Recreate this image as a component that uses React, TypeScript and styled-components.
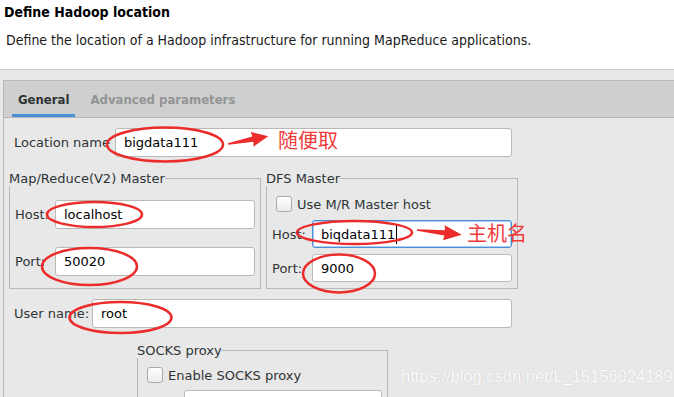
import React from 'react';
import styled, { createGlobalStyle } from 'styled-components';

const GlobalStyle = createGlobalStyle`
  html, body {
    margin: 0;
    padding: 0;
    width: 674px;
    height: 397px;
    overflow: hidden;
    background: #e8e8e8;
  }
  body {
    font-family: "DejaVu Sans", sans-serif;
    font-size: 13px;
    color: #2e3436;
  }
`;

const Page = styled.div`
  position: relative;
  width: 674px;
  height: 397px;
  overflow: hidden;
  background: #e8e8e8;
`;

const Header = styled.div`
  box-sizing: border-box;
  height: 70px;
  padding: 4px 0 0 4px;
  background: #fff;
  border-bottom: 1px solid #cdcdcd;
`;

const Title = styled.div`
  font-family: "DejaVu Sans Condensed", "DejaVu Sans", sans-serif;
  font-stretch: condensed;
  font-size: 14px;
  font-weight: bold;
  line-height: 16px;
  color: #000;
`;

const Subtitle = styled.div`
  font-family: "DejaVu Sans Condensed", "DejaVu Sans", sans-serif;
  font-stretch: condensed;
  font-size: 14px;
  line-height: 16px;
  margin: 12px 0 0 2px;
  color: #1a1a1a;
`;

const Notebook = styled.div`
  margin: 10px 0 0 3px;
  border-left: 1px solid #b8b8b8;
  height: 400px;
`;

const TabBar = styled.div`
  box-sizing: border-box;
  height: 38px;
  display: flex;
  gap: 9px;
  padding-left: 8px;
  background: #cfcfcf;
  border-top: 1px solid #b9b9b9;
  border-bottom: 1px solid #b4b4b4;
`;

const Tab = styled.div<{ $active?: boolean }>`
  box-sizing: border-box;
  height: 100%;
  display: flex;
  align-items: center;
  padding: 3px 6px 0;
  font-family: "DejaVu Sans Condensed", "DejaVu Sans", sans-serif;
  font-stretch: condensed;
  font-weight: bold;
  color: ${p => (p.$active ? '#2e3436' : '#929595')};
  border-bottom: 3px solid ${p => (p.$active ? '#4a90d9' : 'transparent')};
`;

const Content = styled.div`
  padding: 10px 0 0 5px;
`;

const Row = styled.div<{ $labelWidth: number; $top?: number }>`
  display: flex;
  align-items: center;
  width: 498px;
  margin: ${p => p.$top || 0}px 0 0 5px;
  & > label {
    flex: 0 0 ${p => p.$labelWidth}px;
    white-space: nowrap;
  }
`;

const Entry = styled.div<{ $focused?: boolean; $height?: number }>`
  box-sizing: border-box;
  flex: 1;
  height: ${p => p.$height || 29}px;
  display: flex;
  align-items: center;
  padding: 0 8px;
  background: #fff;
  color: #000;
  border: 1px solid ${p => (p.$focused ? '#4a90d9' : '#b9b9b6')};
  box-shadow: ${p => (p.$focused ? 'inset 0 0 0 1px rgba(74,144,217,0.45)' : 'none')};
  border-radius: 3px;
  white-space: nowrap;
  overflow: hidden;
`;

const IndentedEntry = styled(Entry)`
  grid-column: 1 / 3;
  margin-left: 37px;
`;

const Caret = styled.span`
  display: inline-block;
  width: 1px;
  height: 20px;
  margin-left: 1px;
  background: #000;
`;

const Groups = styled.div`
  display: flex;
  gap: 5px;
  width: 509px;
  margin-top: 14px;
`;

const Group = styled.div<{ $width?: number; $left?: number; $top?: number }>`
  display: flex;
  flex-direction: column;
  ${p => (p.$width ? `width: ${p.$width}px;` : 'flex: 1;')}
  margin: ${p => p.$top || 0}px 0 0 ${p => p.$left || 0}px;
`;

const GroupTitle = styled.div`
  display: flex;
  height: 15px;
  line-height: 15px;
  white-space: nowrap;
  &::after {
    content: '';
    flex: 1;
    margin-top: 7px;
    border-top: 1px solid #b9b9b9;
    border-right: 1px solid #b9b9b9;
  }
`;

const GroupBody = styled.div<{ $pad: string; $rowGap: number }>`
  flex: 1;
  display: grid;
  grid-template-columns: auto 1fr;
  align-content: start;
  align-items: center;
  column-gap: 6px;
  row-gap: ${p => p.$rowGap}px;
  padding: ${p => p.$pad};
  border: 1px solid #b9b9b9;
  border-top: none;
`;

const CheckRow = styled.div<{ $indent?: number }>`
  grid-column: 1 / 3;
  display: flex;
  align-items: center;
  gap: 5px;
  height: 20px;
  margin-left: ${p => p.$indent ?? 4}px;
`;

const Check = styled.span`
  box-sizing: border-box;
  width: 16px;
  height: 16px;
  border: 1px solid #a9a9a9;
  border-radius: 3px;
  background: linear-gradient(#ffffff, #ececec);
`;

const Marks = styled.svg`
  position: absolute;
  left: 0;
  top: 0;
  pointer-events: none;
`;

const Note = styled.span<{ $x: number; $y: number }>`
  position: absolute;
  left: ${p => p.$x}px;
  top: ${p => p.$y}px;
  font-family: "Noto Sans CJK SC", sans-serif;
  font-size: 20px;
  line-height: 20px;
  color: #ef3a3a;
`;

const Watermark = styled.div`
  position: absolute;
  left: 401px;
  top: 367px;
  font-family: "Liberation Sans", Arial, sans-serif;
  font-size: 16.5px;
  line-height: 18px;
  color: rgba(255, 255, 255, 0.95);
  text-shadow: 0 0 1px rgba(150, 150, 150, 0.45);
  white-space: nowrap;
`;

const RED = '#ec2b2b';

// arrow drawn along +x from its tail, then placed and turned
const arrow = (x: number, y: number, len: number, angle: number) => {
  const pts = [
    [0, -0.8], [0.62, -2.6], [0.6, -7.5], [1, 0], [0.6, 7.5], [0.62, 2.6], [0, 0.8],
  ]
    .map(([a, b]) => `${(a * len).toFixed(1)},${b}`)
    .join(' ');
  return <polygon points={pts} fill={RED} transform={`translate(${x} ${y}) rotate(${angle})`} />;
};

const rings = [
  { cx: 165, cy: 144.5, rx: 58, ry: 17 },
  { cx: 94.5, cy: 214.5, rx: 47.5, ry: 12.5 },
  { cx: 89.5, cy: 266.5, rx: 47.5, ry: 18.5 },
  { cx: 354.5, cy: 232.5, rx: 57.5, ry: 11.5 },
  { cx: 339, cy: 273.5, rx: 36, ry: 19 },
  { cx: 120.5, cy: 317.5, rx: 51, ry: 15.5 },
];

const App: React.FC = () => {
  return (
    <Page>
      <GlobalStyle />
      <Header>
        <Title>Define Hadoop location</Title>
        <Subtitle>Define the location of a Hadoop infrastructure for running MapReduce applications.</Subtitle>
      </Header>
      <Notebook>
        <TabBar>
          <Tab $active>General</Tab>
          <Tab>Advanced parameters</Tab>
        </TabBar>
        <Content>
          <Row $labelWidth={101}>
            <label>Location name</label>
            <Entry>bigdata111</Entry>
          </Row>
          <Groups>
            <Group>
              <GroupTitle>Map/Reduce(V2) Master</GroupTitle>
              <GroupBody $pad="14px 5px 12px 5px" $rowGap={18}>
                <label>Host:</label>
                <Entry>localhost</Entry>
                <label>Port:</label>
                <Entry>50020</Entry>
              </GroupBody>
            </Group>
            <Group>
              <GroupTitle>DFS Master</GroupTitle>
              <GroupBody $pad="8px 5px 6px 5px" $rowGap={6}>
                <CheckRow>
                  <Check />
                  <span>Use M/R Master host</span>
                </CheckRow>
                <label>Host:</label>
                <Entry $focused $height={28}>
                  biqdata111<Caret />
                </Entry>
                <label>Port:</label>
                <Entry $height={28}>9000</Entry>
              </GroupBody>
            </Group>
          </Groups>
          <Row $labelWidth={78} $top={10}>
            <label>User name:</label>
            <Entry>root</Entry>
          </Row>
          <Group $width={251} $left={128} $top={15}>
            <GroupTitle>SOCKS proxy</GroupTitle>
            <GroupBody $pad="7px 5px 6px 9px" $rowGap={5}>
              <CheckRow $indent={0}>
                <Check />
                <span>Enable SOCKS proxy</span>
              </CheckRow>
              <IndentedEntry $height={28} />
            </GroupBody>
          </Group>
        </Content>
      </Notebook>

      <Marks width={674} height={397} viewBox="0 0 674 397">
        {rings.map((r, i) => (
          <ellipse key={i} cx={r.cx} cy={r.cy} rx={r.rx} ry={r.ry} fill="none" stroke={RED} strokeWidth={2.5} />
        ))}
        {arrow(228, 144, 41, -11)}
        {arrow(417, 230, 45, 6)}
      </Marks>
      <Note $x={278} $y={130}>随便取</Note>
      <Note $x={467} $y={223}>主机名</Note>
      <Watermark>https://blog.csdn.net/L_15156024189</Watermark>
    </Page>
  );
};

export default App;
